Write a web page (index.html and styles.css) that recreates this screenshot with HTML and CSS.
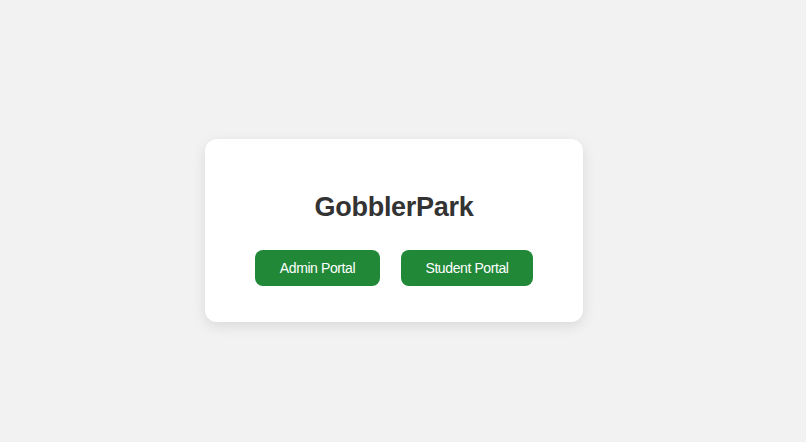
FILE: index.html
```html
<!DOCTYPE html>
<html lang="en">
<head>
<meta charset="utf-8">
<title>GobblerPark</title>
<link rel="stylesheet" href="styles.css">
</head>
<body>
<main class="page">
  <div class="card">
    <h1 class="title">GobblerPark</h1>
    <div class="actions">
      <a class="btn btn-admin" href="#">Admin Portal</a>
      <a class="btn btn-student" href="#">Student Portal</a>
    </div>
  </div>
</main>
</body>
</html>
```

FILE: styles.css
```css
html, body {
  margin: 0;
  padding: 0;
  background: #f2f2f2;
  font-family: "Liberation Sans", Arial, sans-serif;
}

.page {
  box-sizing: border-box;
  min-height: 100vh;
  display: flex;
  align-items: center;
  justify-content: center;
  padding: 19px 18px 0 0;
}

.card {
  box-sizing: border-box;
  width: 378px;
  height: 183px;
  background: #ffffff;
  border-radius: 12px;
  box-shadow: 0 4px 14px rgba(0, 0, 0, 0.1);
  padding: 52px 50px 36px;
  display: flex;
  flex-direction: column;
  align-items: center;
}

.title {
  margin: 0 0 27px;
  font-size: 27px;
  font-weight: bold;
  color: #333333;
  line-height: 32px;
  letter-spacing: -0.3px;
}

.actions {
  display: flex;
  gap: 21px;
}

.btn {
  box-sizing: border-box;
  display: flex;
  align-items: center;
  justify-content: center;
  height: 36px;
  background: #218838;
  color: #ffffff;
  text-decoration: none;
  font-size: 14px;
  letter-spacing: -0.4px;
  border-radius: 8px;
}

.btn-admin {
  width: 125px;
}

.btn-student {
  width: 132px;
}
```
